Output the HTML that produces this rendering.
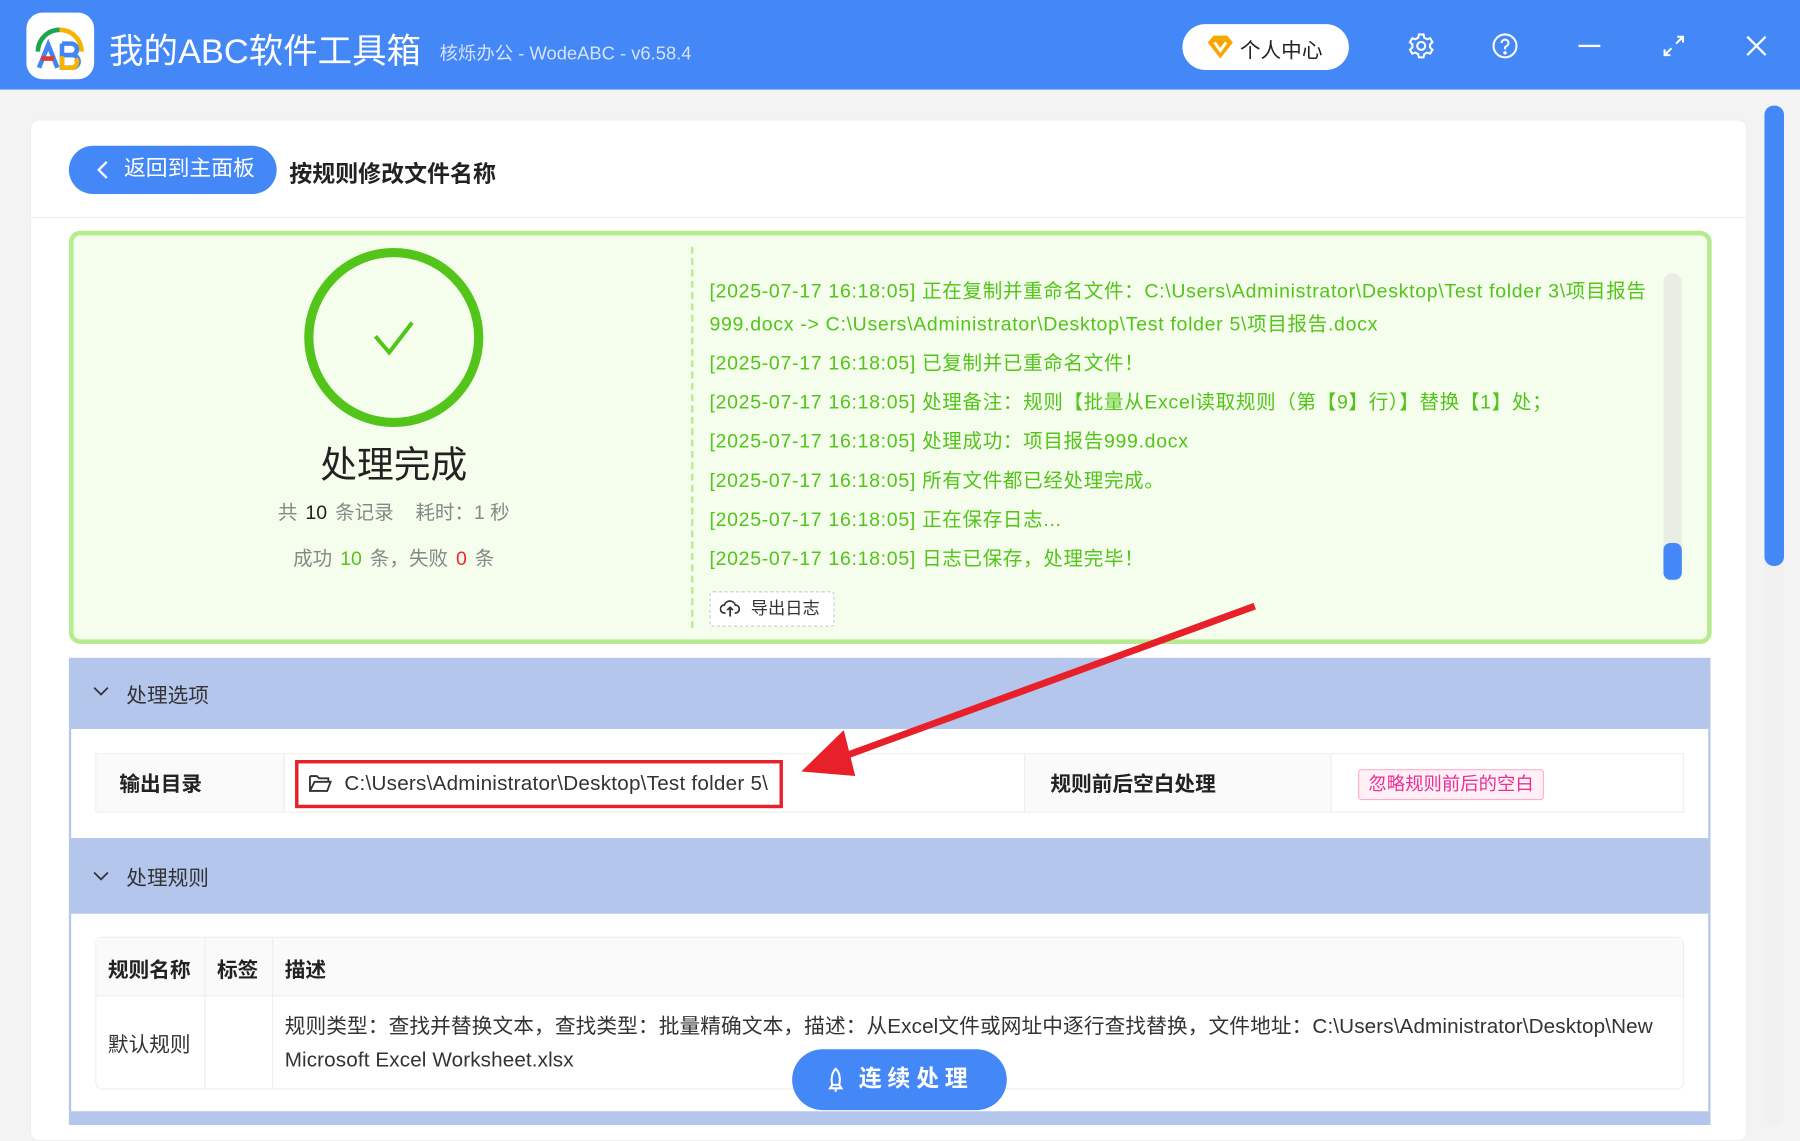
<!DOCTYPE html>
<html><head><meta charset="utf-8"><style>
*{margin:0;padding:0;box-sizing:border-box}
html,body{width:1800px;height:1140px;overflow:hidden;background:#f3f3f3}
#w{position:absolute;left:0;top:0;width:1568px;height:993px;transform:scale(1.148);transform-origin:0 0;font-family:"Liberation Sans","Noto Sans CJK SC",sans-serif;background:#f3f3f3}
.a{position:absolute}
.hdr{left:0;top:0;width:1568px;height:78px;background:#4487f6}
.log{position:absolute;left:618px;color:#52c41a;font-size:17px;white-space:nowrap;letter-spacing:.6px}
.sec{position:absolute;left:60px;width:1430px;background:#b5c6ed;color:#333;font-size:18px}
.cell{position:absolute;border-right:1px solid #eee;font-size:18px;display:flex;align-items:center}
.n{margin:0 7px}
</style></head><body><div id="w">
<div class="a hdr"></div>
<div class="a" style="left:23px;top:11px;width:59px;height:58px;background:#fff;border-radius:14px"></div>
<svg class="a" style="left:23px;top:11px" width="59" height="58" viewBox="0 0 59 58">
<path d="M10 34 A19 19 0 0 1 29 15" stroke="#1aa64a" stroke-width="4" fill="none"/>
<path d="M29 15 A19 19 0 0 1 48 34" stroke="#f4b400" stroke-width="4" fill="none"/>
<path d="M11 48 L19 28 L27 48" stroke="#4285f4" stroke-width="4" fill="none"/>
<path d="M13 40 H24" stroke="#e53935" stroke-width="4"/>
<path d="M31 27 V48 H40 A5 5 0 0 0 40 37 H31 M31 27 H39 A5 5 0 0 1 39 37" stroke="#4285f4" stroke-width="4" fill="none"/>
<path d="M31 38 V48 H40 A5 5 0 0 0 43 40" stroke="#f4b400" stroke-width="4" fill="none"/>
</svg>
<div class="a" style="left:95px;top:20px;color:#fff;font-size:30px">我的ABC软件工具箱</div>
<div class="a" style="left:383px;top:33px;color:#d5e3ff;font-size:16px">核烁办公 - WodeABC - v6.58.4</div>
<div class="a" style="left:1030px;top:21px;width:145px;height:40px;background:#fff;border-radius:20px"></div>
<svg class="a" style="left:1050px;top:30px" width="26" height="22" viewBox="0 0 26 22"><path d="M2 7 L7 1 H19 L24 7 L13 21 Z" fill="#f7a800"/><path d="M8 7 L13 14 L18 7" stroke="#fff" stroke-width="2.5" fill="none"/></svg>
<div class="a" style="left:1080px;top:30px;font-size:18px;color:#222">个人中心</div>
<svg class="a" style="left:1226px;top:28px" width="24" height="24" viewBox="0 0 24 24" fill="none" stroke="#fff" stroke-width="1.8"><circle cx="12" cy="12" r="3.5"/><path d="M10 2h4l.6 2.8 2.5 1.4 2.7-.9 2 3.4-2.1 1.9v2.8l2.1 1.9-2 3.4-2.7-.9-2.5 1.4L14 22h-4l-.6-2.8-2.5-1.4-2.7.9-2-3.4 2.1-1.9v-2.8L2.2 8.7l2-3.4 2.7.9 2.5-1.4z"/></svg>
<svg class="a" style="left:1299px;top:28px" width="24" height="24" viewBox="0 0 24 24" fill="none" stroke="#fff" stroke-width="1.8"><circle cx="12" cy="12" r="10"/><path d="M9 9.5a3 3 0 1 1 4 2.8c-.7.3-1 .9-1 1.7v1"/><circle cx="12" cy="18" r=".6" fill="#fff"/></svg>
<div class="a" style="left:1375px;top:39px;width:19px;height:2px;background:#fff"></div>
<svg class="a" style="left:1448px;top:30px" width="20" height="20" viewBox="0 0 20 20" fill="none" stroke="#fff" stroke-width="1.8"><path d="M12 8 L18 2 M13 2h5v5 M8 12 L2 18 M2 13v5h5"/></svg>
<svg class="a" style="left:1521px;top:31px" width="18" height="18" viewBox="0 0 18 18" stroke="#fff" stroke-width="2"><path d="M1 1L17 17M17 1L1 17"/></svg>

<div class="a" style="left:26px;top:104px;width:1496px;height:890px;background:#fff;border-radius:8px;border:1px solid #eee"></div>
<div class="a" style="left:60px;top:127px;width:181px;height:42px;background:#4487f6;border-radius:21px;color:#fff;font-size:19px;line-height:42px;padding-left:48px">返回到主面板</div>
<svg class="a" style="left:82px;top:139px" width="14" height="18" viewBox="0 0 14 18"><path d="M11 2 L4 9 L11 16" stroke="#fff" stroke-width="2" fill="none"/></svg>
<div class="a" style="left:252px;top:135px;font-size:20px;font-weight:bold;color:#222">按规则修改文件名称</div>
<div class="a" style="left:27px;top:189px;width:1494px;height:1px;background:#eee"></div>

<div class="a" style="left:60px;top:201px;width:1431px;height:360px;background:#f5feec;border:4px solid #b7eb8f;border-radius:10px"></div>
<svg class="a" style="left:264px;top:215px" width="160" height="160" viewBox="0 0 160 160"><circle cx="79" cy="79" r="74" stroke="#52c41a" stroke-width="8" fill="none"/><path d="M63 78 L75 92 L95 66" stroke="#52c41a" stroke-width="3.5" fill="none"/></svg>
<div class="a" style="left:203px;top:380px;width:280px;text-align:center;font-size:32px;color:#222">处理完成</div>
<div class="a" style="left:183px;top:432px;width:320px;text-align:center;font-size:17px;color:#888;white-space:nowrap">共<span class="n" style="color:#222">10</span>条记录 &nbsp;&nbsp;&nbsp;耗时：1 秒</div>
<div class="a" style="left:183px;top:472px;width:320px;text-align:center;font-size:17px;color:#888;white-space:nowrap">成功<span class="n" style="color:#52c41a">10</span>条，失败<span class="n" style="color:#f5222d">0</span>条</div>
<div class="a" style="left:602px;top:215px;height:332px;border-left:2px dashed #b7eb8f"></div>
<div class="log" style="top:239px">[2025-07-17 16:18:05] 正在复制并重命名文件：C:\Users\Administrator\Desktop\Test folder 3\项目报告</div>
<div class="log" style="top:268px">999.docx -&gt; C:\Users\Administrator\Desktop\Test folder 5\项目报告.docx</div>
<div class="log" style="top:302px">[2025-07-17 16:18:05] 已复制并已重命名文件！</div>
<div class="log" style="top:336px">[2025-07-17 16:18:05] 处理备注：规则【批量从Excel读取规则（第【9】行）】替换【1】处；</div>
<div class="log" style="top:370px">[2025-07-17 16:18:05] 处理成功：项目报告999.docx</div>
<div class="log" style="top:404px">[2025-07-17 16:18:05] 所有文件都已经处理完成。</div>
<div class="log" style="top:438px">[2025-07-17 16:18:05] 正在保存日志...</div>
<div class="log" style="top:472px">[2025-07-17 16:18:05] 日志已保存，处理完毕！</div>
<div class="a" style="left:1449px;top:238px;width:16px;height:268px;background:#e8eee4;border-radius:8px"></div>
<div class="a" style="left:1449px;top:473px;width:16px;height:32px;background:#4487f6;border-radius:6px"></div>
<div class="a" style="left:618px;top:515px;width:109px;height:31px;border:1px dashed #ccc;background:#fff;border-radius:3px;font-size:15px;color:#333;line-height:29px;padding-left:35px">导出日志</div>
<svg class="a" style="left:627px;top:522px" width="18" height="16" viewBox="0 0 18 16" fill="none" stroke="#333" stroke-width="1.5"><path d="M5 12H4a3.5 3.5 0 0 1 0-7 5 5 0 0 1 9.5 0 3.5 3.5 0 0 1 0 7H13"/><path d="M9 15V7M6.5 9.5L9 7l2.5 2.5"/></svg>

<div class="sec" style="top:573px;height:62px"><span class="a" style="left:50px;top:19px">处理选项</span></div>
<svg class="a" style="left:81px;top:597px" width="14" height="10" viewBox="0 0 14 10"><path d="M1 2 L7 8 L13 2" stroke="#333" stroke-width="1.5" fill="none"/></svg>
<div class="a" style="left:60px;top:635px;width:1430px;height:95px;background:#fff;border-left:2px solid #b5c6ed;border-right:2px solid #b5c6ed"></div>
<div class="a" style="left:83px;top:656px;width:1384px;height:52px;border:1px solid #eee"></div>
<div class="cell" style="left:84px;top:657px;width:164px;height:50px;background:#fafafa;padding-left:20px;font-weight:bold;color:#222">输出目录</div>
<div class="cell" style="left:892px;top:657px;width:268px;height:50px;background:#fafafa;padding-left:22px;font-weight:bold;color:#222;border-left:1px solid #eee">规则前后空白处理</div>
<div class="a" style="left:257px;top:662px;width:425px;height:42px;border:3px solid #e8202a"></div>
<svg class="a" style="left:268px;top:673px" width="22" height="18" viewBox="0 0 22 18" fill="none" stroke="#333" stroke-width="1.6"><path d="M2 3h6l2 2h8v3 M2 3v13h15l3-8H6l-4 8"/></svg>
<div class="a" style="left:300px;top:672px;font-size:18px;color:#333;letter-spacing:.2px">C:\Users\Administrator\Desktop\Test folder 5\</div>
<div class="a" style="left:1183px;top:670px;width:162px;height:27px;background:#fff0f6;border:1px solid #ffadd2;border-radius:3px;color:#eb2f96;font-size:16px;line-height:25px;text-align:center">忽略规则前后的空白</div>

<div class="sec" style="top:730px;height:66px"><span class="a" style="left:50px;top:21px">处理规则</span></div>
<svg class="a" style="left:81px;top:758px" width="14" height="10" viewBox="0 0 14 10"><path d="M1 2 L7 8 L13 2" stroke="#333" stroke-width="1.5" fill="none"/></svg>
<div class="a" style="left:60px;top:796px;width:1430px;height:172px;background:#fff;border-left:2px solid #b5c6ed;border-right:2px solid #b5c6ed"></div>
<div class="a" style="left:83px;top:816px;width:1384px;height:133px;border:1px solid #eee;border-radius:6px"></div>
<div class="a" style="left:84px;top:817px;width:1382px;height:51px;background:#fafafa;border-bottom:1px solid #eee"></div>
<div class="a" style="left:178px;top:817px;width:1px;height:131px;background:#eee"></div>
<div class="a" style="left:237px;top:817px;width:1px;height:131px;background:#eee"></div>
<div class="a" style="left:94px;top:831px;font-size:18px;font-weight:bold;color:#222">规则名称</div>
<div class="a" style="left:189px;top:831px;font-size:18px;font-weight:bold;color:#222">标签</div>
<div class="a" style="left:248px;top:831px;font-size:18px;font-weight:bold;color:#222">描述</div>
<div class="a" style="left:94px;top:896px;font-size:18px;color:#333">默认规则</div>
<div class="a" style="left:248px;top:880px;font-size:18px;color:#333;line-height:29px;width:1212px;letter-spacing:.1px">规则类型：查找并替换文本，查找类型：批量精确文本，描述：从Excel文件或网址中逐行查找替换，文件地址：C:\Users\Administrator\Desktop\New Microsoft Excel Worksheet.xlsx</div>
<div class="a" style="left:60px;top:968px;width:1430px;height:12px;background:#b5c6ed"></div>
<div class="a" style="left:690px;top:914px;width:187px;height:53px;background:#4487f6;border-radius:27px;color:#fff;font-size:20px;font-weight:bold;letter-spacing:5px;line-height:53px;padding-left:58px">连续处理</div>
<svg class="a" style="left:720px;top:930px" width="16" height="22" viewBox="0 0 16 22" fill="none" stroke="#fff" stroke-width="1.8"><path d="M8 1C4 5 4 11 5 15h6c1-4 1-10-3-14z M5 15l-2 3h10l-2-3 M8 18v3"/></svg>

<div class="a" style="left:1537px;top:92px;width:17px;height:888px;background:#f0f0f0;border-radius:8px"></div>
<div class="a" style="left:1537px;top:92px;width:17px;height:401px;background:#4487f6;border-radius:8px"></div>

<svg class="a" style="left:0;top:0" width="1568" height="993"><path d="M1093 528 L732 660" stroke="#e8202a" stroke-width="6"/><polygon points="698,672 735,636 745,676" fill="#e8202a"/></svg>
</div></body></html>
